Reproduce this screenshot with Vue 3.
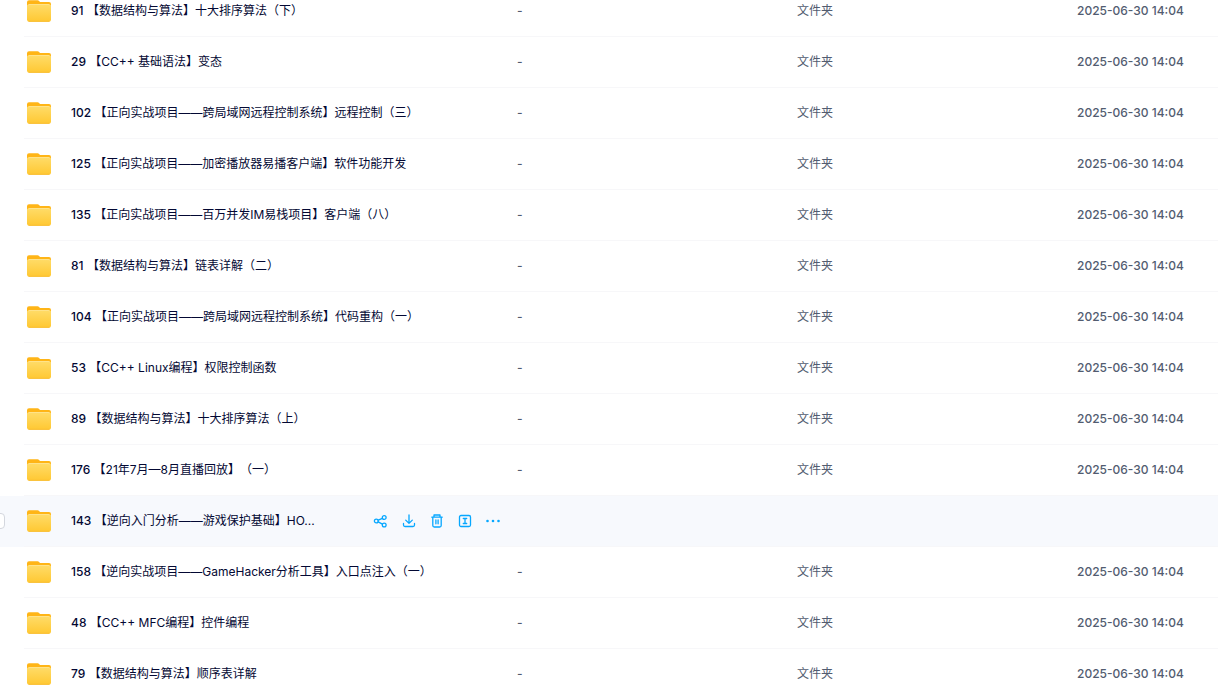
<script setup>
const rows = [
  ['91', '【数据结构与算法】十大排序算法（下）'],
  ['29', '【CC++ 基础语法】变态'],
  ['102', '【正向实战项目——跨局域网远程控制系统】远程控制（三）'],
  ['125', '【正向实战项目——加密播放器易播客户端】软件功能开发'],
  ['135', '【正向实战项目——百万并发IM易栈项目】客户端（八）'],
  ['81', '【数据结构与算法】链表详解（二）'],
  ['104', '【正向实战项目——跨局域网远程控制系统】代码重构（一）'],
  ['53', '【CC++ Linux编程】权限控制函数'],
  ['89', '【数据结构与算法】十大排序算法（上）'],
  ['176', '【21年7月—8月直播回放】（一）'],
  ['143', '【逆向入门分析——游戏保护基础】HO...'],
  ['158', '【逆向实战项目——GameHacker分析工具】入口点注入（一）'],
  ['48', '【CC++ MFC编程】控件编程'],
  ['79', '【数据结构与算法】顺序表详解'],
].map(([num, title]) => ({ num, title, active: num === '143' }))
</script>

<template>
  <div class="list">
    <svg class="defs" aria-hidden="true">
      <defs>
        <linearGradient id="folder-front" x1="0" y1="0" x2="0" y2="1">
          <stop offset="0" stop-color="#ffdc69" />
          <stop offset="1" stop-color="#ffc832" />
        </linearGradient>
      </defs>
    </svg>
    <table>
      <colgroup>
        <col class="c-check" />
        <col class="c-name" />
        <col class="c-size" />
        <col class="c-type" />
        <col class="c-date" />
      </colgroup>
      <tbody>
        <tr v-for="r in rows" :key="r.num" :class="{ active: r.active }">
          <td class="check">
            <input v-if="r.active" type="checkbox" :aria-label="r.num + ' ' + r.title" />
          </td>
          <td class="line">
            <div class="namecell">
              <svg class="folder" viewBox="0 0 26 24" aria-hidden="true">
                <path d="M1 3.200a2 2 0 0 1 2-2h8.500q1 0 1.600.7l.4.500q.5.500 1.300.5H23a2 2 0 0 1 2 2V14H1z" fill="#ffb517" />
                <rect x="1" y="5" width="24" height="17.800" rx="2.500" fill="url(#folder-front)" />
                <path d="M2 6.500Q2.500 5.500 4 5.500H22Q23.500 5.500 24 6.500" fill="none" stroke="#ffe38a" stroke-width="1" />
                <path d="M2.500 22.300H23.500" stroke="#f9be35" stroke-width="1" />
              </svg>
              <span class="name"><span class="num">{{ r.num }}</span> {{ r.title }}</span>
              <div v-if="r.active" class="actions">
                <button type="button" aria-label="分享">
                  <svg viewBox="0 0 16 16">
                    <circle cx="3.300" cy="8" r="1.900" />
                    <circle cx="11.200" cy="4.500" r="1.900" />
                    <circle cx="11.200" cy="12" r="1.900" />
                    <path d="M5.200 7.200 9.400 5.400M5.200 8.900 9.400 11.100" />
                  </svg>
                </button>
                <button type="button" aria-label="下载">
                  <svg viewBox="0 0 16 16">
                    <path d="M8 2V10.300M4.700 7.100 8 10.400 11.300 7.100M2.500 10.500V12Q2.500 13.500 4 13.500H12Q13.500 13.500 13.500 12V10.500" />
                  </svg>
                </button>
                <button type="button" aria-label="删除">
                  <svg viewBox="0 0 16 16">
                    <path d="M2.800 4.200H13.200M5 4V2H11V4M3.800 4.500V12.500Q3.800 14 5.300 14H10.700Q12.200 14 12.200 12.500V4.500M6.900 7V10.800M9.100 7V10.800" />
                  </svg>
                </button>
                <button type="button" aria-label="重命名">
                  <svg viewBox="0 0 16 16">
                    <rect x="2.500" y="2.500" width="11" height="11" rx="1.500" />
                    <path d="M6.300 5.500H9.700M6.300 10.500H9.700M8 5.500V10.500" />
                  </svg>
                </button>
                <button type="button" aria-label="更多">
                  <svg viewBox="0 0 16 16" class="dots">
                    <circle cx="2.500" cy="8" r="1.300" />
                    <circle cx="8" cy="8" r="1.300" />
                    <circle cx="13.500" cy="8" r="1.300" />
                  </svg>
                </button>
              </div>
            </div>
          </td>
          <template v-if="!r.active">
            <td class="line">-</td>
            <td class="line type">文件夹</td>
            <td class="line date">2025-06-30 14:04</td>
          </template>
          <td v-else class="line" colspan="3"></td>
        </tr>
      </tbody>
    </table>
  </div>
</template>

<style scoped>
.list {
  height: 100vh;
  overflow: hidden;
  font: 500 12px/18px Inter, "Noto Sans CJK SC", sans-serif;
  color: #525c70;
  background: #fff;
  text-spacing-trim: space-all;
}
.defs { display: block; width: 0; height: 0; }
table { width: 100%; border-collapse: collapse; table-layout: fixed; margin-top: -14px; }
td { padding: 0; height: 50px; }
.line { border-bottom: 1px solid #f7f7f9; }
.c-check { width: 24px; }
.c-name { width: 493px; }
.c-size { width: 280px; }
.c-date { width: 141px; }
.namecell { display: flex; align-items: center; }
.folder { width: 26px; height: 24px; margin: 0 19px 0 2px; }
.name { font-weight: 400; color: #030833; }
.num { font-weight: 500; }
.type { font-weight: 400; }
.active { background: #f7f9fd; }
.check input {
  appearance: none;
  display: block;
  width: 16px;
  height: 16px;
  margin: 0 0 0 -11px;
  border: 1px solid #d4d7de;
  border-radius: 4px;
  background: #fff;
}
.actions { display: flex; gap: 12px; margin-left: auto; margin-right: 16px; }
button { display: block; width: 16px; height: 16px; padding: 0; border: 0; background: none; cursor: pointer; }
button svg {
  display: block;
  width: 16px;
  height: 16px;
  fill: none;
  stroke: #06a7ff;
  stroke-width: 1.3;
  stroke-linecap: round;
  stroke-linejoin: round;
}
button .dots { fill: #06a7ff; stroke: none; }
</style>
